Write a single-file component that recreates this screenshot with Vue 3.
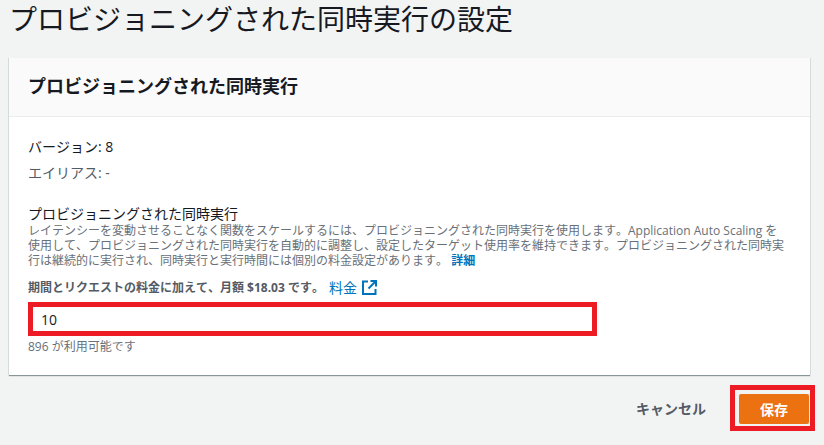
<script setup>
const title = 'プロビジョニングされた同時実行の設定'
const heading = 'プロビジョニングされた同時実行'
const concurrency = 10
</script>

<template>
  <div class="page" lang="ja">
    <h1 class="title">{{ title }}</h1>

    <section class="card">
      <header class="card-header">
        <h2>{{ heading }}</h2>
      </header>
      <div class="card-body">
        <p class="meta version">バージョン: 8</p>
        <p class="meta alias">エイリアス: -</p>

        <div class="label">{{ heading }}</div>
        <p class="desc">
          レイテンシーを変動させることなく関数をスケールするには、プロビジョニングされた同時実行を使用します。Application Auto Scaling を<br>
          使用して、プロビジョニングされた同時実行を自動的に調整し、設定したターゲット使用率を維持できます。プロビジョニングされた同時実<br>
          行は継続的に実行され、同時実行と実行時間には個別の料金設定があります。 <a class="more">詳細</a>
        </p>

        <div class="price">
          <span class="price-text">期間とリクエストの料金に加えて、月額 $18.03 です。</span>
          <a class="price-link">料金</a>
          <svg class="ext" width="15" height="15" viewBox="0 0 15 15" fill="none" stroke="#0073bb" stroke-width="2">
            <path d="M6 1.5H1v12.500h12.500V9" />
            <path d="M8.500 1H14v5.500" />
            <path d="M14 1L6.500 8.500" />
          </svg>
        </div>

        <div class="input-mark">
          <input class="input" type="text" :value="concurrency">
        </div>
        <div class="hint">896 が利用可能です</div>
      </div>
    </section>

    <footer class="actions">
      <a class="cancel">キャンセル</a>
      <div class="save-mark">
        <button class="save" type="button">保存</button>
      </div>
    </footer>
  </div>
</template>

<style>
html,
body {
  margin: 0;
  background: #f2f3f3;
  overflow: hidden;
}
</style>

<style scoped>
.page {
  width: 824px;
  height: 445px;
  box-sizing: border-box;
  padding: 0 14px 0 9px;
  overflow: hidden;
  background: #f2f3f3;
  font-family: "Open Sans", "Noto Sans CJK JP", sans-serif;
  color: #16191f;
  text-spacing-trim: space-all;
  font-kerning: none;
}

.title {
  margin: 0;
  height: 58px;
  box-sizing: border-box;
  font-size: 28px;
  line-height: 38px;
  font-weight: 400;
  color: #16191f;
}

.card {
  width: 801px;
  height: 317px;
  background: #fff;
  box-shadow: -1px 0 0 #d5dbdb, 1px 0 0 #d5dbdb, 0 1px 1px #879596;
}

.card-header {
  height: 59px;
  box-sizing: border-box;
  padding: 0 19px 2px;
  background: #fafafa;
  border-bottom: 1px solid #eaeded;
  display: flex;
  align-items: center;
}

.card-header h2 {
  margin: 0;
  font-size: 18px;
  line-height: 26px;
  font-weight: 700;
}

.card-body {
  padding: 20px 19px 0;
}

.meta {
  margin: 0;
  font-size: 14px;
  line-height: 20px;
}

.version {
  color: #16191f;
}

.alias {
  margin-top: 6px;
  color: #545b64;
}

.label {
  margin-top: 21px;
  font-size: 14px;
  line-height: 19px;
}

.desc {
  margin: 0;
  font-size: 12px;
  line-height: 15px;
  color: #687078;
  white-space: nowrap;
}

.more {
  color: #0073bb;
  font-weight: 700;
}

.price {
  margin-top: 9px;
  height: 20px;
  display: flex;
  align-items: center;
  font-size: 12px;
}

.price-text {
  font-weight: 700;
  color: #545b64;
}

.price-link {
  margin-left: 5px;
  font-size: 14px;
  color: #0073bb;
}

.ext {
  margin-left: 5px;
}

.input-mark {
  margin-top: 5px;
  width: 569px;
  height: 34px;
  box-sizing: border-box;
  border: 5px solid #ed1c24;
  background: #fff;
}

.input {
  display: block;
  width: 100%;
  height: 100%;
  box-sizing: border-box;
  border: none;
  outline: none;
  padding: 0 8px;
  font-family: inherit;
  font-size: 14px;
  color: #16191f;
  background: #fff;
}

.hint {
  margin-top: 2px;
  font-size: 12px;
  line-height: 18px;
  color: #687078;
}

.actions {
  width: 806px;
  margin-top: 10px;
  display: flex;
  justify-content: flex-end;
  align-items: center;
}

.cancel {
  margin-right: 24px;
  font-size: 14px;
  font-weight: 700;
  color: #545b64;
}

.save-mark {
  width: 85px;
  height: 46px;
  box-sizing: border-box;
  border: 5px solid #ed1c24;
  padding: 4px 0 0 4px;
  background: #f2f3f3;
}

.save {
  display: block;
  width: 70px;
  height: 30px;
  border: none;
  border-radius: 2px;
  padding: 0;
  background: #ec7211;
  color: #fff;
  font-family: inherit;
  font-size: 14px;
  font-weight: 700;
}
</style>
